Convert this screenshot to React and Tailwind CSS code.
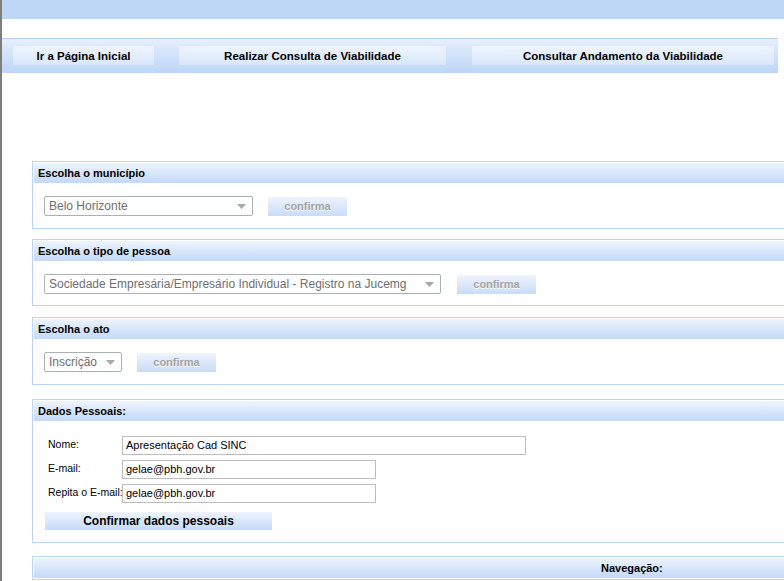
import React from 'react';

const NAV = [
  { label: 'Ir a Página Inicial', w: 'w-[141px]', ml: 'ml-[11px]' },
  { label: 'Realizar Consulta de Viabilidade', w: 'w-[267px]', ml: 'ml-[25px]' },
  { label: 'Consultar Andamento da Viabilidade', w: 'w-[302px]', ml: 'ml-[26px]' },
];

const Section = ({ title, children, className = '' }) => (
  <div className={`ml-[30px] w-[820px] border border-[#bcd4f5] p-px bg-white ${className}`}>
    <div className="h-[20px] pl-[4px] flex items-center bg-gradient-to-b from-[#eef4fd] to-[#c2d9f8] text-[11px] font-bold text-black">
      {title}
    </div>
    {children}
  </div>
);

const Select = ({ value, w }) => (
  <div className={`${w} h-[20px] border border-[#a9b0b8] rounded-[2px] bg-white flex items-center justify-between pl-[4px] pr-[6px] text-[12px] text-[#707070]`}>
    <span className="whitespace-nowrap overflow-hidden">{value}</span>
    <svg width="9" height="5" viewBox="0 0 9 5" className="shrink-0 ml-1">
      <path d="M0 0h9L4.5 5z" fill="#a8a8a8" />
    </svg>
  </div>
);

const Confirma = ({ ml }) => (
  <button className={`${ml} w-[79px] h-[19px] bg-gradient-to-b from-[#eef4fd] to-[#c9dcf8] text-[11px] font-bold text-[#a3a3a3] [text-shadow:0_1px_0_#fff]`}>
    confirma
  </button>
);

const Field = ({ label, value, w }) => (
  <div className="flex items-center h-[24px]">
    <span className="w-[76px] pl-[2px] text-[10.5px] text-black whitespace-nowrap">{label}</span>
    <div className={`${w} h-[19px] border border-[#bdbdbd] bg-white pl-[3px] flex items-center text-[11px] text-black`}>
      {value}
    </div>
  </div>
);

export default function App() {
  return (
    <div className="w-[784px] h-[581px] flex bg-white overflow-hidden font-['Liberation_Sans',Arial,sans-serif]">
      <div className="w-[2px] shrink-0 bg-[#7e7e7e]" />
      <div className="flex-1 overflow-hidden">
        <div className="h-[19px] bg-[#bfd7f7]" />
        <div className="h-[19px]" />
        <div className="w-[776px] h-[35px] border-t border-[#b7d0f4] bg-gradient-to-b from-[#e6effd] to-[#bcd5f7] flex items-start pt-[7px]">
          {NAV.map(n => (
            <button
              key={n.label}
              className={`${n.ml} ${n.w} h-[19px] pt-[2px] bg-gradient-to-b from-[#eef4fe] to-[#d9e7fb] text-[11.5px] font-bold text-black flex items-center justify-center`}
            >
              {n.label}
            </button>
          ))}
        </div>

        <div className="h-[88px]" />

        <Section title="Escolha o município" className="h-[68px]">
          <div className="flex items-center pl-[10px] pt-[13px]">
            <Select value="Belo Horizonte" w="w-[209px]" />
            <Confirma ml="ml-[15px]" />
          </div>
        </Section>

        <Section title="Escolha o tipo de pessoa" className="h-[67px] mt-[10px]">
          <div className="flex items-center pl-[10px] pt-[13px]">
            <Select value="Sociedade Empresária/Empresário Individual - Registro na Jucemg" w="w-[397px]" />
            <Confirma ml="ml-[16px]" />
          </div>
        </Section>

        <Section title="Escolha o ato" className="h-[68px] mt-[11px]">
          <div className="flex items-center pl-[10px] pt-[13px]">
            <Select value="Inscrição" w="w-[78px]" />
            <Confirma ml="ml-[15px]" />
          </div>
        </Section>

        <Section title="Dados Pessoais:" className="h-[144px] mt-[14px]">
          <div className="pl-[12px] pt-[12px]">
            <Field label="Nome:" value="Apresentação Cad SINC" w="w-[404px]" />
            <Field label="E-mail:" value="gelae@pbh.gov.br" w="w-[254px]" />
            <Field label="Repita o E-mail:" value="gelae@pbh.gov.br" w="w-[254px]" />
            <button className="mt-[7px] -ml-[1px] w-[227px] h-[18px] bg-gradient-to-b from-[#eef4fe] to-[#c6dbf8] text-[12px] font-bold text-black">
              Confirmar dados pessoais
            </button>
          </div>
        </Section>

        <Section title={<span className="pl-[563px]">Navegação:</span>} className="mt-[13px]" />
      </div>
    </div>
  );
}
